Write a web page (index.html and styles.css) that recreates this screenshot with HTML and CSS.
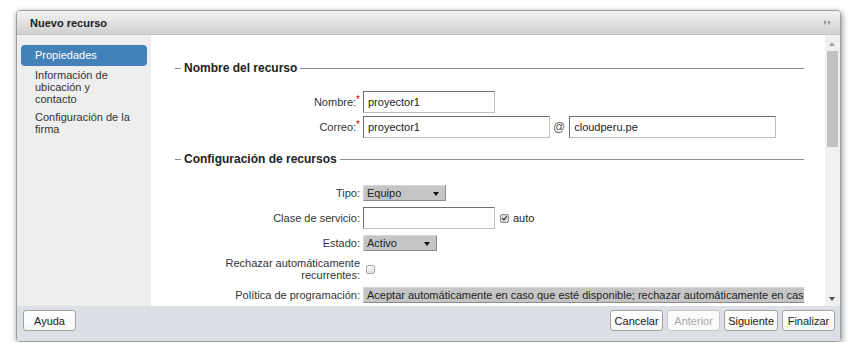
FILE: index.html
```html
<!DOCTYPE html>
<html lang="es">
<head>
  <meta charset="UTF-8">
  <title>Nuevo recurso</title>
  <link rel="stylesheet" href="styles.css">
</head>
<body>
  <div class="dialog">
    <div class="titlebar">
      <span class="title">Nuevo recurso</span>
      <svg class="title-icon" width="8" height="5" viewBox="0 0 8 5">
        <polygon points="0,0 3,2.5 0,5" fill="#9a9a9a"/>
        <polygon points="4,0 7,2.5 4,5" fill="#9a9a9a"/>
      </svg>
    </div>

    <div class="dialog-body">
      <ul class="nav">
        <li class="nav-item active">Propiedades</li>
        <li class="nav-item">Información de ubicación y contacto</li>
        <li class="nav-item">Configuración de la firma</li>
      </ul>

      <div class="content">
        <fieldset class="section">
          <legend>Nombre del recurso</legend>
          <div class="row">
            <label class="label">Nombre:<span class="req">*</span></label>
            <input class="text" type="text" value="proyector1" style="width: 132px">
          </div>
          <div class="row">
            <label class="label">Correo:<span class="req">*</span></label>
            <input class="text" type="text" value="proyector1" style="width: 187px">
            <span class="at">@</span>
            <input class="text" type="text" value="cloudperu.pe" style="width: 207px">
          </div>
        </fieldset>

        <fieldset class="section">
          <legend>Configuración de recursos</legend>
          <div class="row">
            <label class="label">Tipo:</label>
            <div class="select" style="width: 83px">
              <span class="select-text">Equipo</span>
              <span class="caret"></span>
            </div>
          </div>
          <div class="row">
            <label class="label">Clase de servicio:</label>
            <input class="text" type="text" value="" style="width: 132px">
            <span class="check checked"></span>
            <span class="check-label">auto</span>
          </div>
          <div class="row">
            <label class="label">Estado:</label>
            <div class="select" style="width: 74px">
              <span class="select-text">Activo</span>
              <span class="caret"></span>
            </div>
          </div>
          <div class="row tall">
            <label class="label">Rechazar automáticamente<br>recurrentes:</label>
            <span class="check"></span>
          </div>
          <div class="row">
            <label class="label">Política de programación:</label>
            <div class="select wide">
              <span class="select-text">Aceptar automáticamente en caso que esté disponible; rechazar automáticamente en caso de conflicto</span>
            </div>
          </div>
        </fieldset>
      </div>

      <div class="scrollbar">
        <div class="sb-arrow up"></div>
        <div class="sb-thumb"></div>
        <div class="sb-space"></div>
        <div class="sb-arrow down"></div>
      </div>
    </div>

    <div class="footer">
      <button class="btn">Ayuda</button>
      <div class="btn-group">
        <button class="btn">Cancelar</button>
        <button class="btn" disabled>Anterior</button>
        <button class="btn">Siguiente</button>
        <button class="btn">Finalizar</button>
      </div>
    </div>
  </div>
</body>
</html>
```

FILE: styles.css
```css
body {
  margin: 0;
  padding: 10px 0 0 16px;
  background: #fff;
  font-family: "Liberation Sans", Arial, sans-serif;
  font-size: 11px;
  color: #333;
}
.dialog {
  width: 823px;
  height: 330px;
  border: 1px solid #9c9c9c;
  border-radius: 4px;
  overflow: hidden;
  display: flex;
  flex-direction: column;
  box-shadow: 1px 2px 6px rgba(0,0,0,0.45);
}
.titlebar {
  height: 24px;
  flex: none;
  display: flex;
  align-items: center;
  justify-content: space-between;
  padding: 0 8px 0 13px;
  background: linear-gradient(#f3f3f3, #d0d0d0);
  border-bottom: 1px solid #c4c4c4;
  box-sizing: border-box;
}
.title {
  font-weight: bold;
  color: #222;
}
.dialog-body {
  flex: 1;
  display: flex;
  min-height: 0;
}
.nav {
  list-style: none;
  margin: 0;
  padding: 10px 4px 0 4px;
  width: 126px;
  flex: none;
  background: #eeeeee;
}
.nav-item {
  padding: 3px 15px 3px 14px;
  line-height: 12px;
  color: #333;
}
.nav-item.active {
  padding-top: 4px;
  padding-bottom: 5px;
  background: #4581b9;
  color: #fff;
  border-radius: 4px;
}
.content {
  flex: 1;
  min-width: 0;
  background: #fff;
  padding: 26px 21px 0 24px;
  overflow: hidden;
}
.section {
  margin: 0 0 14px 0;
  padding: 16px 0 0 0;
  border: 0;
  border-top: 1px solid #8e8e8e;
  min-width: 0;
}
.section legend {
  margin-left: 6px;
  padding: 0 3px;
  font-size: 12px;
  line-height: 14px;
  font-weight: bold;
  color: #222;
}
.row {
  display: flex;
  align-items: center;
  min-height: 22px;
  margin-bottom: 3px;
  white-space: nowrap;
}
.row:last-child {
  margin-bottom: 0;
}
.row.tall {
  min-height: 24px;
}
.label {
  width: 185px;
  flex: none;
  margin-right: 3px;
  text-align: right;
  line-height: 12px;
  color: #333;
}
.req {
  color: #d00;
  vertical-align: top;
  font-size: 10px;
  line-height: 8px;
}
.text {
  height: 22px;
  box-sizing: border-box;
  margin: 0;
  padding: 0 4px;
  font-family: inherit;
  font-size: 11px;
  color: #222;
  border: 1px solid;
  border-color: #6e6e6e #bdbdbd #bdbdbd #6e6e6e;
  background: #fff;
  outline: none;
}
.at {
  margin: 0 4px 0 3px;
  font-size: 12px;
  color: #555;
}
.select {
  position: relative;
  height: 16px;
  box-sizing: border-box;
  display: flex;
  align-items: center;
  background: #c5c5c5;
  border: 1px solid;
  border-color: #d6d6d6 #8a8a8a #8a8a8a #d6d6d6;
  overflow: hidden;
}
.select-text {
  padding-left: 3px;
  color: #222;
  line-height: 14px;
}
.select.wide {
  width: 449px;
  border-right: 0;
}
.caret {
  position: absolute;
  right: 6px;
  top: 6px;
  width: 0;
  height: 0;
  border-left: 3.5px solid transparent;
  border-right: 3.5px solid transparent;
  border-top: 4px solid #111;
}
.check {
  display: inline-block;
  width: 9px;
  height: 9px;
  box-sizing: border-box;
  margin-left: 3px;
  border: 1px solid #a8a8a8;
  border-radius: 2px;
  background: linear-gradient(#fafafa, #e2e2e2);
  position: relative;
}
.text + .check {
  margin-left: 5px;
}
.check.checked {
  background: #d8d8d8;
  border-color: #8c8c8c;
}
.check.checked::after {
  content: "";
  position: absolute;
  left: 2px;
  top: 0px;
  width: 2px;
  height: 4px;
  border-right: 1.5px solid #222;
  border-bottom: 1.5px solid #222;
  transform: rotate(40deg);
}
.check-label {
  margin-left: 4px;
  color: #222;
}
.scrollbar {
  width: 15px;
  flex: none;
  background: #f0f0f0;
  display: flex;
  flex-direction: column;
  align-items: center;
}
.sb-arrow {
  height: 16px;
  width: 15px;
  position: relative;
  flex: none;
}
.sb-arrow::after {
  content: "";
  position: absolute;
  left: 4px;
  width: 0;
  height: 0;
  border-left: 3.5px solid transparent;
  border-right: 3.5px solid transparent;
}
.sb-arrow.up::after {
  top: 7px;
  border-bottom: 4px solid #a3a3a3;
}
.sb-arrow.down::after {
  top: 7px;
  border-top: 4px solid #505050;
}
.sb-thumb {
  width: 11px;
  height: 96px;
  background: #c1c1c1;
}
.sb-space {
  flex: 1;
}
.footer {
  height: 35px;
  flex: none;
  box-sizing: border-box;
  display: flex;
  justify-content: space-between;
  align-items: flex-start;
  padding: 4px 5px 0 6px;
  background: #dcdfe5;
}
.btn-group {
  display: flex;
  gap: 4px;
}
.btn {
  height: 21px;
  min-width: 53px;
  padding: 0 3px;
  font-family: inherit;
  font-size: 11px;
  color: #222;
  background: linear-gradient(#ffffff, #f6f6f6);
  border: 1px solid #a3a3a3;
  border-radius: 3px;
  cursor: pointer;
}
.btn:disabled {
  color: #a8a8a8;
  border-color: #c8c8c8;
  background: #fafafa;
  cursor: default;
}
```
